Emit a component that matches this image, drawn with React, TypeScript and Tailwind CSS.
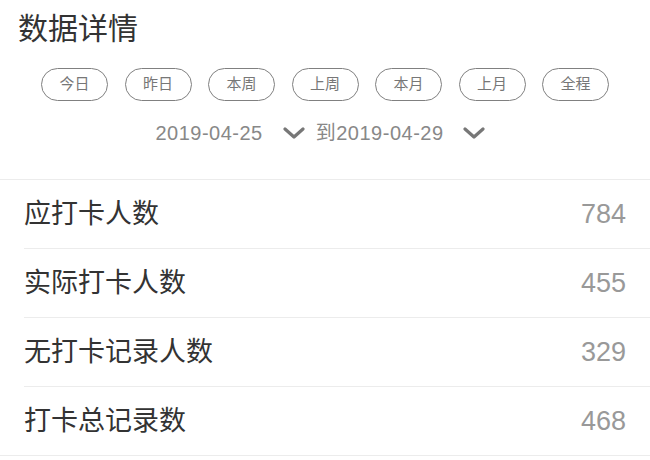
const RANGES = ['今日', '昨日', '本周', '上周', '本月', '上月', '全程'];

const STATS = [
  { label: '应打卡人数', value: 784 },
  { label: '实际打卡人数', value: 455 },
  { label: '无打卡记录人数', value: 329 },
  { label: '打卡总记录数', value: 468 },
];

function Chevron() {
  return (
    <svg width="22" height="14" viewBox="0 0 22 14" className="text-[#777]">
      <path d="M2 3 L11 11 L20 3" fill="none" stroke="currentColor" strokeWidth="3.2" strokeLinecap="round" strokeLinejoin="round" />
    </svg>
  );
}

export default function App() {
  return (
    <div
      className="w-[650px] h-[460px] bg-white overflow-hidden"
      style={{ fontFamily: '"Liberation Sans", "Noto Sans CJK SC", sans-serif' }}
    >
      <div className="pl-[18px] pt-[10px] text-[30px] leading-[38px] text-[#333]">数据详情</div>

      <div className="flex justify-center gap-[16.5px] mt-[20px]">
        {RANGES.map(r => (
          <div
            key={r}
            className="w-[67px] h-[33px] rounded-full border-[1.5px] border-[#808080] flex items-center justify-center text-[15px] text-[#777]"
          >
            {r}
          </div>
        ))}
      </div>

      <div className="flex items-center justify-center pr-[10px] mt-[15px] h-[34px] text-[20px] tracking-[0.5px] text-[#888]">
        <span>2019-04-25</span>
        <span className="ml-[20px]"><Chevron /></span>
        <span className="ml-[11px]">到2019-04-29</span>
        <span className="ml-[19px]"><Chevron /></span>
      </div>

      <div className="mt-[29px] border-t border-[#ececec]">
        {STATS.map((s, i) => (
          <div
            key={s.label}
            className={`flex items-center justify-between h-[69px] pr-[24px] ml-[24px] border-b ${
              i === STATS.length - 1 ? 'border-transparent' : 'border-[#ececec]'
            }`}
          >
            <span className="text-[27px] text-[#333]">{s.label}</span>
            <span className="text-[27px] text-[#999]">{s.value}</span>
          </div>
        ))}
        <div className="border-t border-[#ececec] -mt-px" />
      </div>
    </div>
  );
}
